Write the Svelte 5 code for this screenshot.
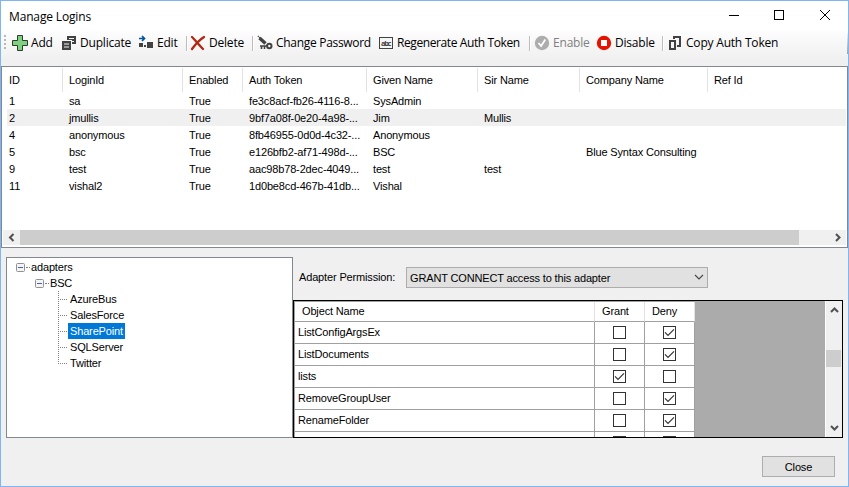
<script>
    const columns = ['ID', 'LoginId', 'Enabled', 'Auth Token', 'Given Name', 'Sir Name', 'Company Name', 'Ref Id'];

    const logins = [
        ['1', 'sa', 'True', 'fe3c8acf-fb26-4116-8...', 'SysAdmin', '', '', ''],
        ['2', 'jmullis', 'True', '9bf7a08f-0e20-4a98-...', 'Jim', 'Mullis', '', ''],
        ['4', 'anonymous', 'True', '8fb46955-0d0d-4c32-...', 'Anonymous', '', '', ''],
        ['5', 'bsc', 'True', 'e126bfb2-af71-498d-...', 'BSC', '', 'Blue Syntax Consulting', ''],
        ['9', 'test', 'True', 'aac98b78-2dec-4049...', 'test', 'test', '', ''],
        ['11', 'vishal2', 'True', '1d0be8cd-467b-41db...', 'Vishal', '', '', '']
    ];

    const adapters = ['AzureBus', 'SalesForce', 'SharePoint', 'SQLServer', 'Twitter'];

    let permissions = $state([
        { name: 'ListConfigArgsEx', grant: false, deny: true },
        { name: 'ListDocuments', grant: false, deny: true },
        { name: 'lists', grant: true, deny: false },
        { name: 'RemoveGroupUser', grant: false, deny: true },
        { name: 'RenameFolder', grant: false, deny: true },
        { name: '', grant: false, deny: false }
    ]);

    let selectedLogin = $state('2');
    let selectedAdapter = $state('SharePoint');

    function toggle(row, key) {
        const other = key === 'grant' ? 'deny' : 'grant';
        row[key] = !row[key];
        if (row[key]) row[other] = false;
    }
</script>

{#snippet check(row, key)}
    <button class="check" aria-label={key} onclick={() => toggle(row, key)}>
        {#if row[key]}
            <svg width="11" height="11" viewBox="0 0 11 11"><path d="M1 5.3 L4 8.3 L10 2.3" fill="none" stroke="#333" stroke-width="1.2" /></svg>
        {/if}
    </button>
{/snippet}

{#snippet expander()}
    <svg class="expander" width="9" height="9" viewBox="0 0 9 9">
        <rect x=".5" y=".5" width="8" height="8" rx="1" fill="#f5f5f5" stroke="#919191" />
        <path d="M2 4.5h5" stroke="#4b63a7" />
    </svg>
{/snippet}

<div class="window">
    <header class="titlebar">
        <h1>Manage Logins</h1>
        <svg width="103" height="12" viewBox="0 0 103 12" fill="none" stroke="#000">
            <path d="M1 6.5h10" />
            <rect x="46.5" y="1.5" width="9" height="9" />
            <path d="M92 1l10 10M102 1l-10 10" />
        </svg>
    </header>

    <nav class="toolbar">
        <i class="grip"></i>
        <button class="add">
            <svg width="16" height="16" viewBox="0 0 16 16"><path d="M5.5 .5h5v5h5v5h-5v5h-5v-5h-5v-5h5z" fill="#7fd080" stroke="#2f3b2f" /></svg>
            <span>Add</span>
        </button>
        <button class="duplicate">
            <svg width="16" height="16" viewBox="0 0 16 16">
                <path d="M6 1h9v8h-4V5H6z" fill="#424242" />
                <path d="M8 3.5h5" stroke="#f5f5f5" />
                <path d="M11 6.5h2" stroke="#f5f5f5" />
                <path d="M1 6h9v9H1z" fill="#424242" />
                <path d="M3 9h5M3 12h5" stroke="#f5f5f5" />
            </svg>
            <span>Duplicate</span>
        </button>
        <button class="edit">
            <svg width="16" height="16" viewBox="0 0 16 16">
                <path d="M1 3.5h5M4 1l2.5 2.5L4 6" fill="none" stroke="#00539c" stroke-width="1.7" />
                <path d="M1 8h4v4H1zM6 10h2v2H6zM9 7h6v6H9z" fill="#424242" />
            </svg>
            <span>Edit</span>
        </button>
        <i class="sep"></i>
        <button class="delete">
            <svg width="16" height="16" viewBox="0 0 16 16"><path d="M2 2c4 4 7 8 11 12M14 2C9 5 5 10 2 14" fill="none" stroke="#b02810" stroke-width="2.3" stroke-linecap="round" /></svg>
            <span>Delete</span>
        </button>
        <i class="sep"></i>
        <button class="password">
            <svg width="16" height="16" viewBox="0 0 16 16" fill="none" stroke="#424242">
                <path d="M2.5 3l6 5.5" stroke-width="3.4" />
                <path d="M1 1l2 2" stroke-width="1.5" stroke-dasharray="1 .7" />
                <circle cx="12.3" cy="11" r="2.2" stroke-width="2" />
                <path d="M3 11h7M4.5 11v3M7.5 11v3" stroke-width="1.6" />
            </svg>
            <span>Change Password</span>
        </button>
        <button class="regenerate">
            <svg width="16" height="16" viewBox="0 0 16 16">
                <rect x="1.5" y="2.5" width="13" height="11" fill="#f5f5f5" stroke="#424242" />
                <text x="8" y="10.8" text-anchor="middle" textLength="10" font-size="7.5" font-weight="700" fill="#424242">abc</text>
            </svg>
            <span>Regenerate Auth Token</span>
        </button>
        <i class="sep"></i>
        <button class="enable" disabled>
            <svg width="16" height="16" viewBox="0 0 16 16">
                <circle cx="8" cy="8" r="7.2" fill="#adadad" />
                <path d="M4.5 8l2.6 3 4.2-6.5" fill="none" stroke="#fff" stroke-width="1.8" />
            </svg>
            <span>Enable</span>
        </button>
        <button class="disable">
            <svg width="16" height="16" viewBox="0 0 16 16">
                <circle cx="8" cy="8" r="7.2" fill="#e51400" />
                <path d="M5 5h6v6H5z" fill="#fff" />
            </svg>
            <span>Disable</span>
        </button>
        <i class="sep"></i>
        <button class="copy">
            <svg width="16" height="16" viewBox="0 0 16 16" fill="none" stroke="#424242" stroke-width="2">
                <path d="M7 4V2h6v9h-3" />
                <path d="M3 6h5v8H3z" />
            </svg>
            <span>Copy Auth Token</span>
        </button>
        <i class="overflow"></i>
    </nav>

    <section class="logins">
        <div class="row head">
            {#each columns as column}
                <span>{column}</span>
            {/each}
        </div>
        {#each logins as login}
            <div class="row" class:selected={login[0] === selectedLogin} onclick={() => selectedLogin = login[0]} role="presentation">
                {#each login as value}
                    <span>{value}</span>
                {/each}
            </div>
        {/each}
        <div class="hscroll">
            <svg width="17" height="15" viewBox="0 0 17 15"><path d="M10.5 4L7 7.5l3.5 3.5" /></svg>
            <div class="thumb"></div>
            <svg width="17" height="15" viewBox="0 0 17 15"><path d="M7 4l3.5 3.5L7 11" /></svg>
        </div>
    </section>

    <main>
        <div class="tree">
            <div class="node root">{@render expander()}<i class="stub"></i><span>adapters</span></div>
            <div class="node group">{@render expander()}<i class="stub"></i><span>BSC</span></div>
            {#each adapters as adapter}
                <div class="node leaf">
                    <i class="branch"></i>
                    <span class:active={adapter === selectedAdapter} onclick={() => selectedAdapter = adapter} role="presentation">{adapter}</span>
                </div>
            {/each}
        </div>

        <div class="pane">
            <div class="permission">
                <span class="label">Adapter Permission:</span>
                <div class="combo">
                    <span>GRANT CONNECT access to this adapter</span>
                    <svg width="10" height="7" viewBox="0 0 10 7"><path d="M1 1l4 4 4-4" fill="none" stroke="#444" stroke-width="1.1" /></svg>
                </div>
            </div>

            <div class="grid">
                <div class="cells">
                    <div class="cell-row cell-head">
                        <span class="name">Object Name</span><span>Grant</span><span>Deny</span>
                    </div>
                    {#each permissions as row}
                        <div class="cell-row">
                            <span class="name">{row.name}</span>
                            <span>{@render check(row, 'grant')}</span>
                            <span>{@render check(row, 'deny')}</span>
                        </div>
                    {/each}
                </div>
                <div class="vscroll">
                    <svg width="16" height="17" viewBox="0 0 16 17"><path d="M5 11l3.5-3.5L12 11" /></svg>
                    <div class="thumb"></div>
                    <svg width="16" height="17" viewBox="0 0 16 17"><path d="M5 6l3.5 3.5L12 6" /></svg>
                </div>
            </div>
        </div>
    </main>

    <footer>
        <button class="close">Close</button>
    </footer>
</div>

<style>
    :global(body) {
        overflow: hidden;
    }
    .window {
        box-sizing: border-box;
        width: 849px;
        height: 487px;
        border: 1px solid #7eb5f4;
        background: #f0f0f0;
        display: flex;
        flex-direction: column;
        font-family: 'Liberation Sans', Arial, sans-serif;
        font-size: 11px;
        letter-spacing: -0.15px;
        color: #000;
        white-space: nowrap;
        cursor: default;
    }
    button {
        font: inherit;
        letter-spacing: inherit;
        color: inherit;
        padding: 0;
        border: 0;
        background: none;
    }
    svg {
        flex: none;
        display: block;
    }

    .titlebar {
        height: 30px;
        flex: none;
        box-sizing: border-box;
        background: #fff;
        display: flex;
        justify-content: space-between;
        padding: 8px 17px 0 8px;
    }
    h1 {
        margin: 0;
        font: 12px/15px 'Open Sans', sans-serif;
        letter-spacing: -0.15px;
    }

    .toolbar {
        height: 35px;
        flex: none;
        display: flex;
        align-items: flex-start;
        padding: 4px 0 0 3px;
        box-sizing: border-box;
        background: linear-gradient(#fdfdfd, #f0f0f0 80%);
        font: 12px/16px 'Open Sans', sans-serif;
        letter-spacing: -0.2px;
    }
    .toolbar button {
        display: flex;
        align-items: center;
        gap: 3px;
        height: 16px;
        flex: none;
    }
    .toolbar button:disabled {
        color: #7f7f7f;
    }
    .grip {
        width: 2px;
        height: 15px;
        margin-right: 6px;
        background: repeating-linear-gradient(#b8b8b8 0 2px, transparent 2px 4px);
    }
    .sep {
        width: 1px;
        height: 15px;
        margin-top: 1px;
        background: #bdbdbd;
        box-shadow: 1px 0 #fff;
    }
    .overflow {
        width: 1px;
        height: 21px;
        margin: -2px 0 0 auto;
        background: linear-gradient(#f0f0f0, #a0a0a0);
    }
    .add { width: 49px; }
    .duplicate { width: 77px; }
    .edit { width: 48px; }
    .delete { width: 62px; margin-left: 3px; }
    .password { width: 121px; margin-left: 4px; letter-spacing: -0.3px; }
    .regenerate { width: 151px; letter-spacing: -0.4px; }
    .enable { width: 62px; margin-left: 4px; }
    .disable { width: 66px; }
    .copy { margin-left: 4px; }

    .logins {
        height: 182px;
        flex: none;
        box-sizing: border-box;
        border: 1px solid #828790;
        background: #fff;
        padding: 1px;
        display: flex;
        flex-direction: column;
    }
    .row {
        display: grid;
        grid-template-columns: 56px 120px 60px 124px 111px 102px 128px 1fr;
        height: 17px;
        line-height: 18px;
        margin-left: 4px;
        flex: none;
    }
    .row span {
        padding-left: 6px;
    }
    .row span:first-child {
        padding-left: 2px;
    }
    .row.head {
        height: 24px;
        line-height: 24px;
    }
    .head span:not(:last-child) {
        border-right: 1px solid #e2e2e2;
    }
    .row.selected {
        background: #f0f0f0;
    }
    .hscroll {
        margin-top: auto;
        margin-bottom: 1px;
        height: 15px;
        background: #f0f0f0;
        display: flex;
        justify-content: space-between;
    }
    .hscroll path, .vscroll path {
        fill: none;
        stroke: #505050;
        stroke-width: 2;
    }
    .hscroll .thumb {
        width: 779px;
        margin-right: auto;
        background: #cdcdcd;
    }

    main {
        display: flex;
        margin: 9px 5px 0 5px;
        height: 181px;
        flex: none;
    }
    .tree {
        width: 287px;
        flex: none;
        box-sizing: border-box;
        border: 1px solid #828790;
        background: #fff;
        padding-top: 1px;
    }
    .node {
        height: 16px;
        line-height: 16px;
        display: flex;
        align-items: center;
    }
    .root { padding-left: 9px; }
    .group { padding-left: 28px; }
    .leaf { padding-left: 51px; }
    .stub {
        width: 4px;
        margin: 0 1px;
        border-top: 1px dotted #808080;
    }
    .branch {
        width: 9px;
        height: 16px;
        background:
            repeating-linear-gradient(90deg, #808080 0 1px, transparent 1px 2px) 0 8px / 9px 1px no-repeat,
            repeating-linear-gradient(#808080 0 1px, transparent 1px 2px) 0 0 / 1px 16px no-repeat;
    }
    .leaf:last-child .branch {
        background-size: 9px 1px, 1px 9px;
    }
    .leaf span {
        padding: 0 2px;
        margin-left: 1px;
    }
    .leaf .active {
        background: #0078d7;
        color: #fff;
    }

    .pane {
        flex: 1;
        display: flex;
        flex-direction: column;
    }
    .permission {
        height: 43px;
        box-sizing: border-box;
        padding: 10px 0 0 6px;
        display: flex;
    }
    .label {
        width: 107px;
        line-height: 20px;
    }
    .combo {
        box-sizing: border-box;
        width: 302px;
        height: 21px;
        padding: 0 3px 0 3px;
        border: 1px solid #adadad;
        background: #e1e1e1;
        display: flex;
        align-items: center;
        justify-content: space-between;
    }
    .grid {
        flex: 1;
        min-height: 0;
        border: 1px solid #000;
        background: #ababab;
        display: flex;
        justify-content: space-between;
        overflow: hidden;
    }
    .cells {
        border-left: 1px solid #a0a0a0;
        border-top: 1px solid #a0a0a0;
    }
    .cell-row {
        display: grid;
        grid-template-columns: 300px 50px 50px;
        height: 22px;
        line-height: 21px;
        background: #fff;
    }
    .cell-row span {
        box-sizing: border-box;
        border-right: 1px solid #a0a0a0;
        border-bottom: 1px solid #a0a0a0;
        display: flex;
        justify-content: center;
        align-items: center;
    }
    .cell-row .name {
        justify-content: flex-start;
        padding-left: 3px;
    }
    .cell-row.cell-head {
        height: 20px;
        line-height: 19px;
    }
    .cell-head span {
        border-right-color: #e2e2e2;
        justify-content: flex-start;
        padding-left: 7px;
    }
    .cell-head .name {
        padding-left: 7px;
    }
    .check {
        width: 13px;
        height: 13px;
        border: 1px solid #333;
        background: #fff;
    }
    .vscroll {
        width: 16px;
        background: #f0f0f0;
        border-left: 1px solid #fff;
        display: flex;
        flex-direction: column;
        justify-content: space-between;
    }
    .vscroll .thumb {
        height: 17px;
        width: 15px;
        margin: 32px 0 auto;
        background: #cdcdcd;
    }

    footer {
        display: flex;
        justify-content: flex-end;
        padding: 18px 13px 0 0;
    }
    .close {
        box-sizing: border-box;
        width: 73px;
        height: 21px;
        border: 1px solid #adadad;
        background: #e1e1e1;
    }
</style>
